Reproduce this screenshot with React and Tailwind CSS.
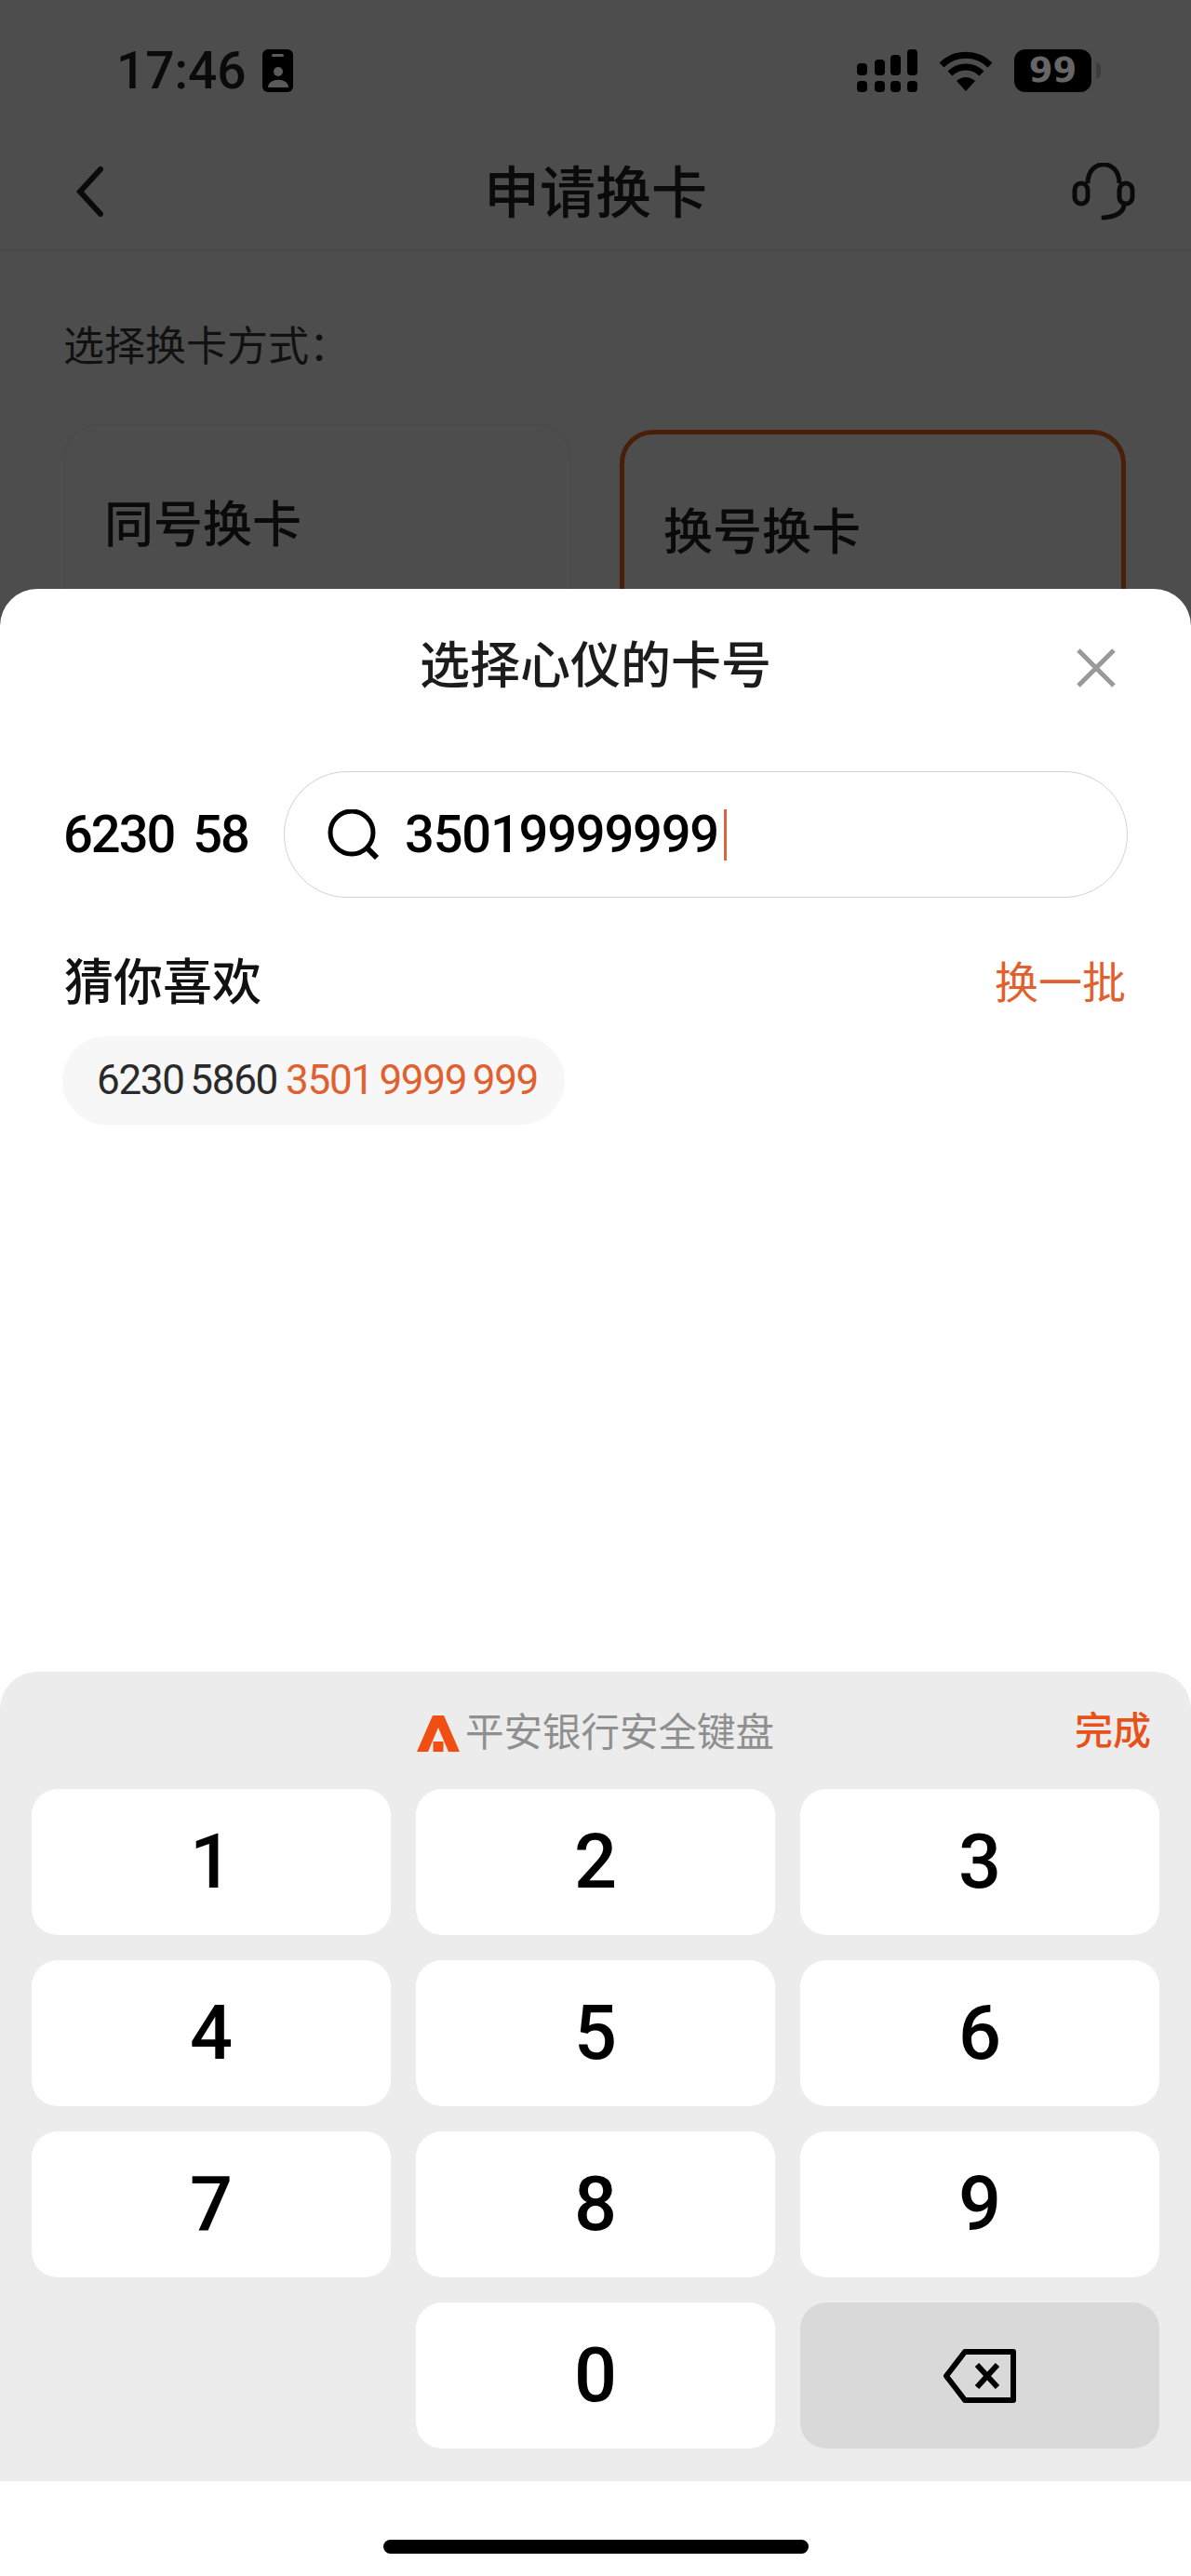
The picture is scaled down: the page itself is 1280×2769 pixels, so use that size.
import React from 'react';

const CJK = "font-['Roboto','Noto_Sans_CJK_SC',sans-serif]";

const keys = ['1', '2', '3', '4', '5', '6', '7', '8', '9'];

const IdIcon = () => (
  <svg width="33" height="46" viewBox="0 0 33 46" className="ml-[17px]">
    <rect width="33" height="46" rx="6" fill="#000" />
    <rect x="10" y="5" width="13" height="3" rx="1.5" fill="#5a5a5a" />
    <circle cx="17" cy="24" r="5" fill="#5a5a5a" />
    <path d="M6 41 C6 30 28 30 28 41 Z" fill="#5a5a5a" />
  </svg>
);

const SignalIcon = () => (
  <svg width="65" height="46" viewBox="0 0 65 46">
    <rect x="0" y="15" width="11" height="13" rx="4" />
    <rect x="19" y="11" width="11" height="17" rx="4" />
    <rect x="36" y="6" width="11" height="22" rx="4" />
    <rect x="54" y="0" width="11" height="28" rx="4" />
    <rect x="0" y="34" width="11" height="12" rx="4" />
    <rect x="19" y="34" width="11" height="12" rx="4" />
    <rect x="36" y="34" width="11" height="12" rx="4" />
    <rect x="54" y="34" width="11" height="12" rx="4" />
  </svg>
);

const WifiIcon = () => (
  <svg width="58" height="44" viewBox="0 0 58 44" fill="none" stroke="#000" strokeWidth="7" className="ml-[23px]">
    <path d="M3 16 A37 37 0 0 1 55 16" />
    <path d="M12 25 A24 24 0 0 1 46 25" />
    <path d="M19 33 Q29 25 39 33 L29 44 Z" fill="#000" stroke="none" />
  </svg>
);

const Battery = () => (
  <div className="ml-[23px] flex items-center">
    <div className="flex h-[46px] w-[83px] items-center justify-center rounded-[12px] bg-black font-['DejaVu_Sans',sans-serif] text-[37px] font-bold text-[#666]">
      99
    </div>
    <div className="ml-[5px] h-[18px] w-[5px] rounded-r-full bg-[#3d3d3d]" />
  </div>
);

const HeadsetIcon = () => (
  <svg width="68" height="62" viewBox="0 0 68 62" fill="none" stroke="#0a0a0a" strokeWidth="5">
    <path d="M17 22 C17 -5 51 -5 51 22" />
    <rect x="3" y="22" width="14" height="22" rx="7" />
    <rect x="51" y="22" width="14" height="22" rx="7" />
    <path d="M56 44 C56 54 46 58 34 59" strokeLinecap="round" />
  </svg>
);

const BackspaceIcon = () => (
  <svg width="78" height="58" viewBox="0 0 78 58" fill="none" stroke="#000" strokeWidth="6">
    <path d="M23 3 H75 V55 H23 L3 29 Z" strokeLinejoin="round" />
    <path d="M36 17 L58 41 M58 17 L36 41" />
  </svg>
);

const Logo = () => (
  <svg width="46" height="39" viewBox="0 0 46 39" fill="#f04e12" className="mr-[6px]">
    <path d="M17 0 H29 L46 39 H34 L23 13 L12 39 H0 Z" />
    <rect x="17.5" y="28" width="11" height="11" />
  </svg>
);

export default function App() {
  return (
    <div className={`flex h-[2769px] w-[1280px] flex-col overflow-hidden bg-[#4d4d4d] ${CJK}`}>
      {/* Dimmed page behind the sheet */}
      <div className="h-[633px] shrink-0 overflow-hidden text-[#0a0a0a]">
        <div className="flex h-[150px] items-center justify-between pl-[125px] pr-[97px] pt-[2px]">
          <div className="flex items-center">
            <span className="text-[55px] font-medium leading-none">17:46</span>
            <IdIcon />
          </div>
          <div className="flex items-center">
            <SignalIcon />
            <WifiIcon />
            <Battery />
          </div>
        </div>

        <header className="flex h-[120px] items-center justify-between border-b-2 border-[#484848] pb-[6px] pl-[80px] pr-[60px]">
          <svg width="34" height="56" viewBox="0 0 34 56" fill="none" stroke="#0a0a0a" strokeWidth="6" strokeLinecap="round">
            <path d="M28 4 L6 28 L28 52" />
          </svg>
          <h1 className="ml-[14px] mt-[5px] text-[60px] font-medium leading-none">申请换卡</h1>
          <HeadsetIcon />
        </header>

        <div className="px-[68px] pt-[78px]">
          <p className="text-[44px] leading-[50px] text-[#111]">选择换卡方式：</p>
          <div className="mt-[58px] flex gap-[52px]">
            <div className="h-[260px] w-[546px] rounded-[36px] border-2 border-[#4b4b4b] px-[42px] pt-[81px]">
              <span className="text-[53px] font-medium leading-none">同号换卡</span>
            </div>
            <div className="mt-[6px] h-[260px] w-[544px] rounded-[36px] border-[5px] border-[#4a1f0a] px-[42px] pt-[80px]">
              <span className="text-[53px] font-medium leading-none">换号换卡</span>
            </div>
          </div>
        </div>
      </div>

      {/* Card number sheet */}
      <div className="flex flex-1 flex-col rounded-t-[40px] bg-white">
        <div className="relative flex h-[196px] shrink-0 items-start justify-center pt-[54px]">
          <h2 className="text-[54px] font-medium leading-[60px] text-[#1c1c1c]">选择心仪的卡号</h2>
          <svg width="44" height="44" viewBox="0 0 44 44" fill="none" stroke="#999" strokeWidth="5" className="absolute right-[80px] top-[63px]">
            <path d="M3 3 L41 41 M41 3 L3 41" />
          </svg>
        </div>

        <div className="flex items-center pl-[68px] pr-[68px]">
          <span className="w-[237px] whitespace-pre text-[56px] font-medium leading-none tracking-[-2px] text-black [word-spacing:8px]">6230 58</span>
          <div className="flex h-[136px] flex-1 items-center rounded-full border-[1.5px] border-[#d2d2d2] pl-[46px]">
            <svg width="56" height="54" viewBox="0 0 56 54" fill="none" stroke="#000" strokeWidth="5">
              <circle cx="26" cy="25" r="23" />
              <path d="M42 41 L53 52" strokeWidth="6" />
            </svg>
            <span className="ml-[27px] text-[56px] font-medium leading-none tracking-[-1.2px] text-black">35019999999</span>
            <span className="ml-[6px] h-[55px] w-[3px] bg-[#d9663a]" />
          </div>
        </div>

        <div className="mt-[62px] flex items-center justify-between pl-[69px] pr-[70px]">
          <span className="text-[53px] font-medium leading-[60px] text-[#111]">猜你喜欢</span>
          <span className="text-[47px] leading-[60px] text-[#e0602f]">换一批</span>
        </div>

        <div className="mt-[27px] pl-[67px]">
          <div className="inline-flex h-[95px] items-center rounded-full bg-[#f7f7f7] pb-[2px] pl-[37px] pr-[29px] text-[44px] leading-none tracking-[-1.3px]">
            <span className="text-[#2a2a2a] [word-spacing:-3px]">6230 5860</span>
            <span className="ml-[9px] text-[#e0602f] [word-spacing:-3px]">3501 9999 999</span>
          </div>
        </div>

        <div className="flex-1" />

        {/* Number keyboard */}
        <div className="h-[870px] shrink-0 rounded-t-[40px] bg-[#ececec] px-[34px]">
          <div className="relative flex h-[126px] items-center justify-center pt-[6px]">
            <Logo />
            <span className="text-[41.5px] leading-none text-[#8f8f8f]">平安银行安全键盘</span>
            <span className="absolute right-[9px] top-[44px] text-[41px] font-medium leading-none text-[#e8511a]">完成</span>
          </div>
          <div className="grid grid-cols-3 gap-x-[27px] gap-y-[27px]">
            {keys.map((k) => (
              <div key={k} className="flex h-[157px] items-center justify-center rounded-[28px] bg-white text-[81px] font-medium leading-none text-black">
                {k}
              </div>
            ))}
            <div />
            <div className="flex h-[157px] items-center justify-center rounded-[28px] bg-white text-[81px] font-medium leading-none text-black">
              0
            </div>
            <div className="flex h-[157px] items-center justify-center rounded-[28px] bg-[#d9d9d9]">
              <BackspaceIcon />
            </div>
          </div>
        </div>

        {/* Home indicator */}
        <div className="flex h-[102px] shrink-0 justify-center pt-[63px]">
          <div className="h-[15px] w-[457px] rounded-full bg-black" />
        </div>
      </div>
    </div>
  );
}
